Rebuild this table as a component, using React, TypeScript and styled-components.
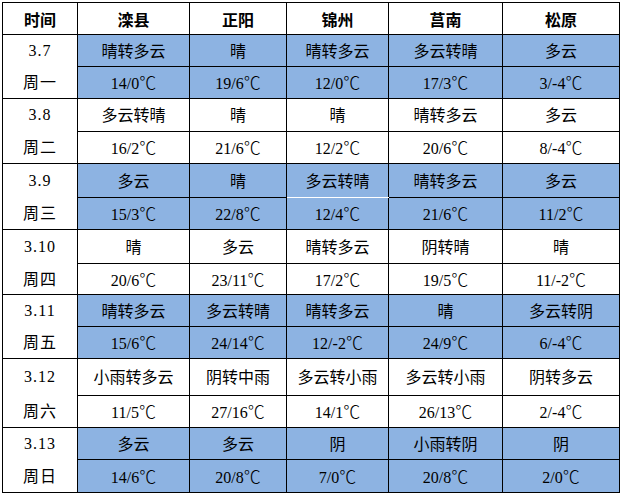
import React from 'react';
import styled, { createGlobalStyle } from 'styled-components';

const GlobalStyle = createGlobalStyle`
  html, body {
    margin: 0;
    padding: 0;
    background: #ffffff;
  }
`;

const BLUE = '#8db3e2';

const Page = styled.div`
  padding: 2px 0 0 2px;
`;

const Table = styled.table`
  border-collapse: collapse;
  table-layout: fixed;
  width: 618px;
  font-family: "Liberation Serif", "Noto Sans CJK SC", serif;
  font-size: 16px;
  color: #000;
`;

const HeadCell = styled.th`
  height: 31px;
  padding: 0;
  border: 1px solid #000;
  background: #fff;
  font-family: "Noto Sans CJK SC", sans-serif;
  font-weight: 700;
  font-size: 16px;
  text-align: center;
  vertical-align: middle;
`;

const DateCell = styled.td<{ $top?: boolean; $h: number }>`
  height: ${(p) => p.$h - 1}px;
  padding: 0;
  border: 1px solid #000;
  ${(p) => (p.$top ? 'border-bottom: hidden;' : 'border-top: hidden;')}
  background: #fff;
  text-align: center;
  vertical-align: middle;
  letter-spacing: 1px;
  line-height: 1;
`;

const Cell = styled.td<{ $blue?: boolean; $h: number; $lineColor?: string }>`
  height: ${(p) => p.$h - 1}px;
  padding: 0;
  border: 1px solid #000;
  ${(p) => (p.$lineColor ? `border-bottom-color: ${p.$lineColor};` : '')}
  background: ${(p) => (p.$blue ? BLUE : '#fff')};
  text-align: center;
  vertical-align: middle;
  line-height: 1;
  white-space: nowrap;
`;

const Weather = styled.span`
  font-family: "Noto Sans CJK SC", sans-serif;
  font-size: 16px;
`;

const Temp = styled.span`
  font-family: "Liberation Serif", "Noto Sans CJK SC", serif;
`;

const Degree = styled.span`
  font-family: "Noto Sans CJK SC", sans-serif;
  font-size: 17px;
  font-weight: 300;
`;

const widths = [75, 112, 97, 102, 114, 117];
const cities = ['滦县', '正阳', '锦州', '莒南', '松原'];

type Group = {
  date: string;
  day: string;
  blue: boolean;
  weather: string[];
  temps: string[];
  h: [number, number];
  whiteLine?: number;
};

const groups: Group[] = [
  {
    date: '3.7', day: '周一', blue: true,
    weather: ['晴转多云', '晴', '晴转多云', '多云转晴', '多云'],
    temps: ['14/0', '19/6', '12/0', '17/3', '3/-4'],
    h: [32, 32],
  },
  {
    date: '3.8', day: '周二', blue: false,
    weather: ['多云转晴', '晴', '晴', '晴转多云', '多云'],
    temps: ['16/2', '21/6', '12/2', '20/6', '8/-4'],
    h: [33, 32],
  },
  {
    date: '3.9', day: '周三', blue: true,
    weather: ['多云', '晴', '多云转晴', '晴转多云', '多云'],
    temps: ['15/3', '22/8', '12/4', '21/6', '11/2'],
    h: [34, 32],
    whiteLine: 2,
  },
  {
    date: '3.10', day: '周四', blue: false,
    weather: ['晴', '多云', '晴转多云', '阴转晴', '晴'],
    temps: ['20/6', '23/11', '17/2', '19/5', '11/-2'],
    h: [34, 31],
  },
  {
    date: '3.11', day: '周五', blue: true,
    weather: ['晴转多云', '多云转晴', '晴转多云', '晴', '多云转阴'],
    temps: ['15/6', '24/14', '12/-2', '24/9', '6/-4'],
    h: [32, 32],
  },
  {
    date: '3.12', day: '周六', blue: false,
    weather: ['小雨转多云', '阴转中雨', '多云转小雨', '多云转小雨', '阴转多云'],
    temps: ['11/5', '27/16', '14/1', '26/13', '2/-4'],
    h: [37, 32],
  },
  {
    date: '3.13', day: '周日', blue: true,
    weather: ['多云', '多云', '阴', '小雨转阴', '阴'],
    temps: ['14/6', '20/8', '7/0', '20/8', '2/0'],
    h: [32, 33],
  },
];

export default function App() {
  return (
    <>
      <GlobalStyle />
      <Page>
        <Table>
          <colgroup>
            {widths.map((w, i) => (
              <col key={i} style={{ width: w }} />
            ))}
          </colgroup>
          <thead>
            <tr>
              <HeadCell>时间</HeadCell>
              {cities.map((c) => (
                <HeadCell key={c}>{c}</HeadCell>
              ))}
            </tr>
          </thead>
          <tbody>
            {groups.map((g) => (
              <React.Fragment key={g.date}>
                <tr>
                  <DateCell $top $h={g.h[0]}>{g.date}</DateCell>
                  {g.weather.map((w, i) => (
                    <Cell
                      key={i}
                      $blue={g.blue}
                      $h={g.h[0]}
                      $lineColor={g.whiteLine === i ? '#fff' : undefined}
                    >
                      <Weather>{w}</Weather>
                    </Cell>
                  ))}
                </tr>
                <tr>
                  <DateCell $h={g.h[1]}>
                    <Weather>{g.day}</Weather>
                  </DateCell>
                  {g.temps.map((t, i) => (
                    <Cell key={i} $blue={g.blue} $h={g.h[1]}>
                      <Temp>{t}</Temp>
                      <Degree>℃</Degree>
                    </Cell>
                  ))}
                </tr>
              </React.Fragment>
            ))}
          </tbody>
        </Table>
      </Page>
    </>
  );
}
